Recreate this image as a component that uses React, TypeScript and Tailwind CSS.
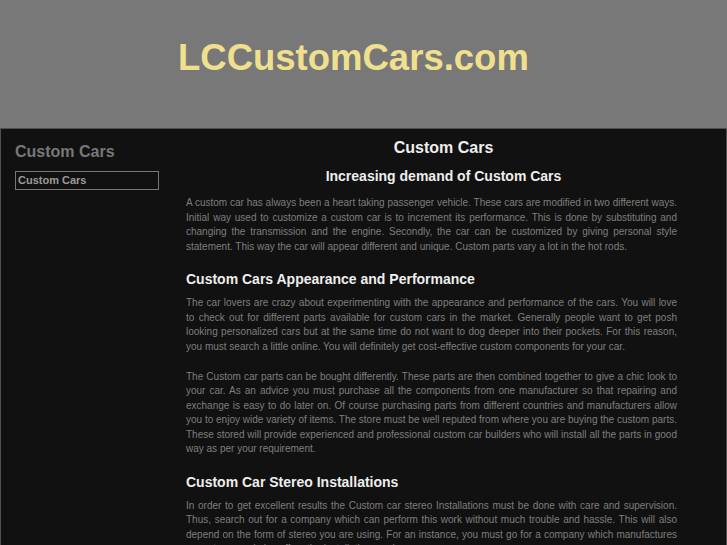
const SECTIONS = [
  {
    title: 'Custom Cars Appearance and Performance',
    paragraphs: [
      'The car lovers are crazy about experimenting with the appearance and performance of the cars. You will love to check out for different parts available for custom cars in the market. Generally people want to get posh looking personalized cars but at the same time do not want to dog deeper into their pockets. For this reason, you must search a little online. You will definitely get cost-effective custom components for your car.',
      'The Custom car parts can be bought differently. These parts are then combined together to give a chic look to your car. As an advice you must purchase all the components from one manufacturer so that repairing and exchange is easy to do later on. Of course purchasing parts from different countries and manufacturers allow you to enjoy wide variety of items. The store must be well reputed from where you are buying the custom parts. These stored will provide experienced and professional custom car builders who will install all the parts in good way as per your requirement.',
    ],
  },
  {
    title: 'Custom Car Stereo Installations',
    paragraphs: [
      'In order to get excellent results the Custom car stereo Installations must be done with care and supervision. Thus, search out for a company which can perform this work without much trouble and hassle. This will also depend on the form of stereo you are using. For an instance, you must go for a company which manufactures your stereo and also offers the installation services.',
    ],
  },
];

export default function App() {
  return (
    <div className="min-h-screen bg-[#111111] font-['Liberation_Sans',Arial,sans-serif]">
      <header className="h-[128px] bg-[#787878] pl-[178px] pt-[40px]">
        <h1 className="text-[36.5px] font-bold leading-[36px] text-[#f0e08e]">LCCustomCars.com</h1>
      </header>

      <div className="flex border-x border-t border-[#505050] bg-[#111111] pb-10">
        <aside className="w-[185px] shrink-0 pl-[14px] pt-[13px]">
          <h2 className="text-[16px] font-bold leading-[20px] text-[#777777]">Custom Cars</h2>
          <div className="mt-[9px] w-[144px] border border-[#777777] px-[2px] py-[2px] text-[11px] leading-[13px]">
            <a href="#" className="block font-bold text-[#9a9a9a]">Custom Cars</a>
          </div>
        </aside>

        <main className="w-[491px] shrink-0 pt-[9px]">
          <h2 className="pl-[24px] text-center text-[16px] font-bold leading-[20px] text-[#eeeeee]">Custom Cars</h2>
          <h3 className="mt-[9px] pl-[24px] text-center text-[14px] font-bold leading-[18px] text-[#eeeeee]">
            Increasing demand of Custom Cars
          </h3>
          <p className="mt-[11px] text-justify text-[10px] leading-[14.5px] text-[#7e7e7e]">
            A custom car has always been a heart taking passenger vehicle. These cars are modified in two different ways. Initial way used to customize a custom car is to increment its performance. This is done by substituting and changing the transmission and the engine. Secondly, the car can be customized by giving personal style statement. This way the car will appear different and unique. Custom parts vary a lot in the hot rods.
          </p>

          {SECTIONS.map((section) => (
            <section key={section.title}>
              <h3 className="mt-[16px] text-[14px] font-bold leading-[18px] text-[#eeeeee]">{section.title}</h3>
              {section.paragraphs.map((text, i) => (
                <p
                  key={i}
                  className={`${i === 0 ? 'mt-[8px]' : 'mt-[15.5px]'} text-justify text-[10px] leading-[14.5px] text-[#7e7e7e]`}
                >
                  {text}
                </p>
              ))}
            </section>
          ))}
        </main>
      </div>
    </div>
  );
}
